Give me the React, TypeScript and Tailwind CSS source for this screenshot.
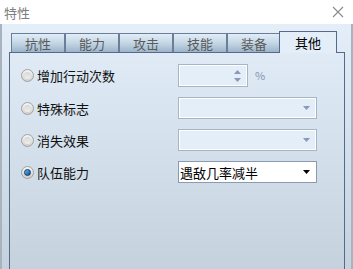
import React from 'react';

const tabs = ['抗性', '能力', '攻击', '技能', '装备'];

const rows = [
    { label: '增加行动次数', kind: 'spin' },
    { label: '特殊标志', kind: 'select' },
    { label: '消失效果', kind: 'select' },
    { label: '队伍能力', kind: 'active', value: '遇敌几率减半' },
];

function Radio({ checked }: { checked?: boolean }) {
    return (
        <span className="w-[13px] h-[13px] rounded-full border border-[#a2a2a2] bg-gradient-to-b from-[#f4f4f4] to-[#cfcfcf] flex items-center justify-center shrink-0">
            {checked ? (
                <span className="w-[7px] h-[7px] rounded-full bg-gradient-to-br from-[#6fb6ef] to-[#0b4f93] border border-[#0c3c6c]" />
            ) : (
                <span className="w-[7px] h-[7px] rounded-full bg-gradient-to-b from-[#d8d8d8] to-[#eeeeee]" />
            )}
        </span>
    );
}

function Arrow({ color }: { color: string }) {
    return (
        <svg width="7" height="4" viewBox="0 0 7 4">
            <path d="M0 0 H7 L3.5 4 Z" fill={color} />
        </svg>
    );
}

function App() {
    return (
        <div className="w-[353px] h-[269px] flex flex-col overflow-hidden text-[13px] leading-none" style={{ fontFamily: '"Noto Sans CJK SC", "Noto Sans", sans-serif' }}>
            {/* title bar */}
            <div className="h-[24px] bg-white flex items-center justify-between pl-[4px] pr-[9px] shrink-0">
                <span className="text-[#7d7d7d] text-[13px]">特性</span>
                <svg width="12" height="12" viewBox="0 0 12 12">
                    <path d="M1 1 L11 11 M11 1 L1 11" stroke="#8a8a8a" strokeWidth="1.1" />
                </svg>
            </div>

            <div className="flex-1 flex flex-col border-l-2 border-r-2 border-[#a8b3c1] bg-gradient-to-b from-[#e3eef9] to-[#c5d2de] pl-[7px] pr-[6px] pt-[7px]">
                {/* tabs */}
                <div className="h-[21px] flex items-end pl-[2px] shrink-0">
                    {tabs.map((t) => (
                        <div
                            key={t}
                            className="w-[54px] h-[19px] border border-b-0 border-[#6a7d99] bg-gradient-to-b from-[#e2edf7] via-[#c4d6e5] to-[#9cb5c9] flex items-center justify-center text-[#5a5a5a]"
                        >
                            {t}
                        </div>
                    ))}
                    <div className="relative z-10 -ml-[2px] -mb-[1px] w-[58px] h-[22px] border border-b-0 border-[#56698d] bg-[#e3eef9] flex items-center justify-center text-black">
                        其他
                    </div>
                </div>

                {/* panel */}
                <div className="flex-1 border border-b-0 border-[#56698d] pl-[11px] pt-[11px] flex flex-col gap-[10px]">
                    {rows.map((r) => (
                        <div key={r.label} className="flex items-center h-[22px] first:h-[23px]">
                            <div className="w-[157px] flex items-center gap-[3px]">
                                <Radio checked={r.kind === 'active'} />
                                <span className="text-[#111]">{r.label}</span>
                            </div>
                            {r.kind === 'spin' && (
                                <div className="flex items-center gap-[7px]">
                                    <div className="w-[70px] h-[23px] border border-[#a5b4c6] shadow-[inset_0_0_0_1px_#ffffff] bg-[#e3eef9] flex justify-end pr-[6px]">
                                        <div className="flex flex-col justify-center gap-[4px]">
                                            <svg width="7" height="4" viewBox="0 0 7 4">
                                                <path d="M0 4 H7 L3.5 0 Z" fill="#8d97b7" />
                                            </svg>
                                            <Arrow color="#8d97b7" />
                                        </div>
                                    </div>
                                    <span className="text-[#8592b2] text-[11px]">%</span>
                                </div>
                            )}
                            {r.kind === 'select' && (
                                <div className="w-[139px] h-[22px] border border-[#a5b4c6] shadow-[inset_0_0_0_1px_#ffffff] bg-[#e3eef9] flex items-center justify-end pr-[6px]">
                                    <Arrow color="#8d97b7" />
                                </div>
                            )}
                            {r.kind === 'active' && (
                                <div className="w-[139px] h-[22px] border border-[#8a9ab0] bg-white flex items-center justify-between pl-[1px] pr-[6px]">
                                    <span className="text-black">{r.value}</span>
                                    <Arrow color="#000000" />
                                </div>
                            )}
                        </div>
                    ))}
                </div>
            </div>
        </div>
    );
}

export default App;
